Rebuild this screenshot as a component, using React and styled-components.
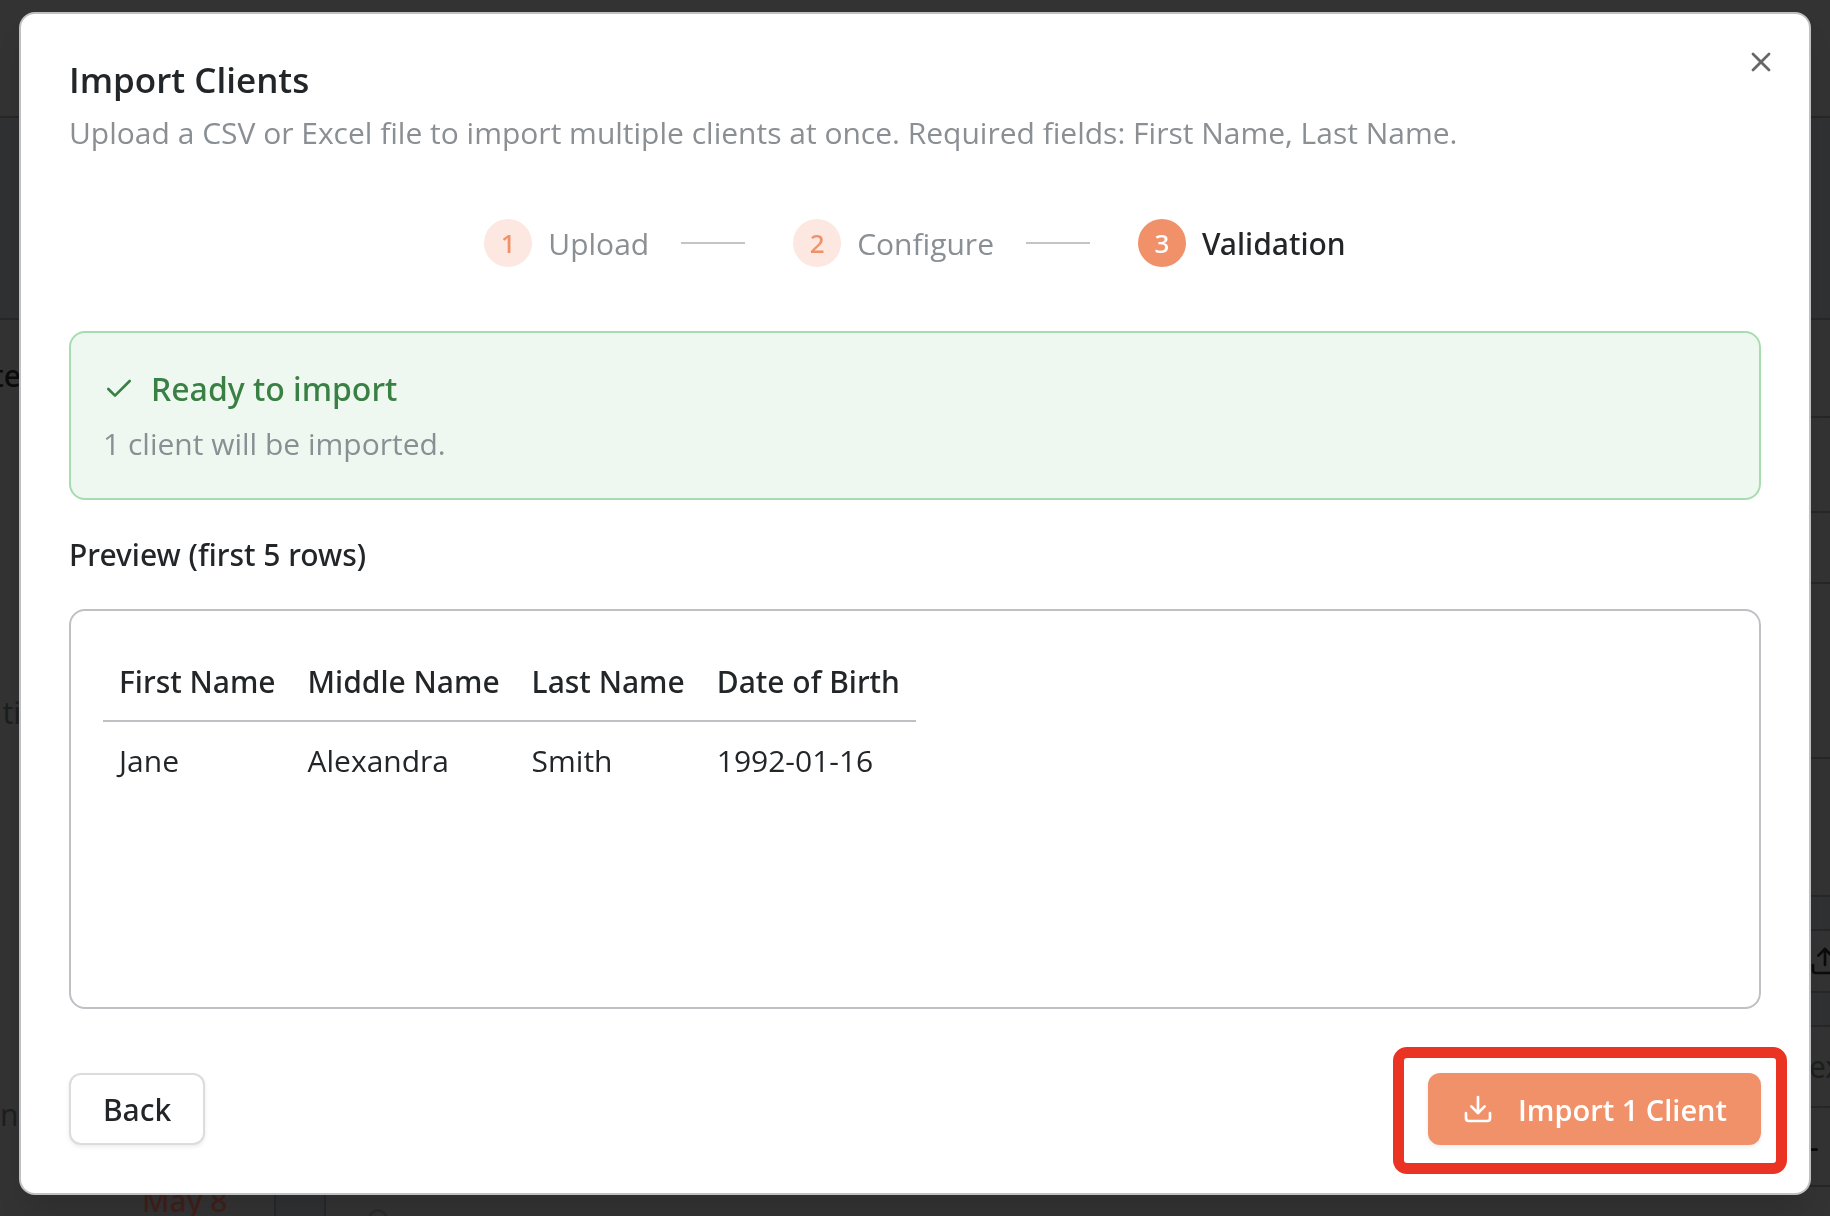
import styled, { createGlobalStyle } from 'styled-components';
import { Check, Download, Upload, X } from 'lucide-react';

const mediumFont = "'Noto Sans', 'Open Sans', sans-serif";

const GlobalStyle = createGlobalStyle`
  * {
    box-sizing: border-box;
  }

  body {
    margin: 0;
    background: #333333;
    color: #232628;
    font-family: 'Open Sans', 'Noto Sans', sans-serif;
    font-size: 30px;
    line-height: 45px;
  }
`;

const Page = styled.div`
  display: flex;
  flex-direction: column;
  height: 100vh;
  overflow: hidden;
  background: #333333;
`;

const PageHeader = styled.div`
  flex: none;
  height: 118px;
  border-bottom: 2px solid #272727;
`;

const PageToolbar = styled.div`
  flex: none;
  height: 202px;
  background: #2f3133;
  border-bottom: 2px solid #272829;
`;

const PageBody = styled.div`
  flex: none;
  display: flex;
  justify-content: space-between;
  height: 867px;
`;

const SideColumn = styled.div`
  width: 21px;
  overflow: hidden;
`;

const SideCell = styled.div`
  display: flex;
  align-items: center;
  justify-content: ${({ $end }) => ($end ? 'flex-end' : 'flex-start')};
  height: ${({ $height }) => $height}px;
  background: ${({ $tinted }) => ($tinted ? '#2f3133' : 'transparent')};
  border-bottom: ${({ $line }) => ($line ? '2px solid #272727' : 'none')};
  color: ${({ $strong }) => ($strong ? '#0b0b0b' : '#1d1f1f')};
  font-family: ${mediumFont};
  font-weight: ${({ $strong }) => ($strong ? 500 : 400)};
  white-space: nowrap;

  svg {
    flex: none;
  }
`;

const DayRow = styled.div`
  flex: 1;
  display: flex;
  align-items: flex-start;
  overflow: hidden;
`;

const DayLabel = styled.div`
  width: 274px;
  padding-left: 142px;
  line-height: 28px;
  color: #40201a;
  font-family: ${mediumFont};
  font-weight: 500;
`;

const DayGutter = styled.div`
  align-self: stretch;
  width: 52px;
  background: #2f3133;
  border: solid #272829;
  border-width: 0 2px;
`;

const DayDot = styled.div`
  width: 20px;
  height: 20px;
  margin: 22px 0 0 42px;
  border: 3px solid #2b2b2b;
  border-radius: 50%;
`;

const Overlay = styled.div`
  position: fixed;
  inset: 0;
  display: flex;
  align-items: flex-start;
  justify-content: center;
  padding: 12px 16px;
`;

const Dialog = styled.section`
  position: relative;
  width: 100%;
  max-width: 1792px;
  padding: 48px;
  background: #ffffff;
  border: 2px solid #bfc0c4;
  border-radius: 16px;
  box-shadow: 0 20px 30px -6px rgba(0, 0, 0, 0.12);
`;

const CloseButton = styled.button`
  position: absolute;
  top: 32px;
  right: 32px;
  display: flex;
  padding: 0;
  border: 0;
  background: none;
  color: #666768;
  cursor: pointer;
`;

const Title = styled.h2`
  margin: 0 0 12px;
  font-size: 35px;
  line-height: 36px;
  font-weight: 600;
`;

const Muted = styled.p`
  margin: 0;
  color: #8a8f94;
`;

const Steps = styled.ol`
  display: flex;
  align-items: center;
  justify-content: center;
  margin: 64px 0;
  padding: 0;
  list-style: none;
`;

const Step = styled.li`
  display: flex;
  align-items: center;
  gap: 16px;
  height: 48px;
  color: ${({ $active }) => ($active ? '#232628' : '#8a8f94')};
  font-family: ${({ $active }) => ($active ? mediumFont : 'inherit')};
  font-weight: ${({ $active }) => ($active ? 500 : 400)};

  &:not(:last-child)::after {
    content: '';
    width: 64px;
    height: 2px;
    margin: 0 48px 0 16px;
    background: #c4c4c6;
  }
`;

const StepNumber = styled.span`
  display: flex;
  align-items: center;
  justify-content: center;
  width: 48px;
  height: 48px;
  border-radius: 50%;
  background: ${({ $active }) => ($active ? '#f0916a' : '#fce8e1')};
  color: ${({ $active }) => ($active ? '#ffffff' : '#f0916a')};
  font-family: ${mediumFont};
  font-size: 26px;
  font-weight: 500;
`;

const Notice = styled.div`
  padding: 32px;
  background: #eff8f0;
  border: 2px solid #a6dcae;
  border-radius: 16px;
`;

const NoticeTitle = styled.div`
  display: flex;
  align-items: center;
  gap: 16px;
  margin-bottom: 8px;
  color: #3a8044;
  font-family: ${mediumFont};
  font-size: 32px;
  line-height: 48px;
  font-weight: 500;
`;

const PreviewTitle = styled.h3`
  margin: 32px 0;
  font-family: ${mediumFont};
  font-size: 30px;
  font-weight: 500;
`;

const PreviewBox = styled.div`
  min-height: 400px;
  padding: 32px;
  border: 2px solid #bfc0c4;
  border-radius: 16px;
`;

const Table = styled.table`
  border-collapse: separate;
  border-spacing: 0;
  text-align: left;
`;

const HeadCell = styled.th`
  padding: 16px;
  border-bottom: 2px solid #bfc0c4;
  font-family: ${mediumFont};
  font-weight: 500;
`;

const Cell = styled.td`
  padding: 16px;
`;

const Footer = styled.div`
  display: flex;
  justify-content: space-between;
  margin-top: 64px;
`;

const Button = styled.button`
  display: flex;
  align-items: center;
  gap: 24px;
  height: 72px;
  padding: 0 32px;
  border: 2px solid #dadcdd;
  border-radius: 12px;
  background: #ffffff;
  box-shadow: 0 2px 4px rgba(0, 0, 0, 0.08);
  color: #232628;
  font-family: ${mediumFont};
  font-size: 30px;
  line-height: 45px;
  font-weight: 500;
  cursor: pointer;
`;

const PrimaryButton = styled(Button)`
  border-color: #f0916a;
  background: #f0916a;
  color: #ffffff;
  font-family: 'Open Sans', sans-serif;
  font-size: 29px;
  font-weight: 600;
`;

const Highlight = styled.div`
  position: relative;

  &::after {
    content: '';
    position: absolute;
    inset: -26px -26px -29px -35px;
    border: 11px solid #ea3323;
    border-radius: 14px;
    pointer-events: none;
  }
`;

const steps = ['Upload', 'Configure', 'Validation'];
const columns = ['First Name', 'Middle Name', 'Last Name', 'Date of Birth'];
const rows = [['Jane', 'Alexandra', 'Smith', '1992-01-16']];

const ClientsPage = () => (
  <Page aria-hidden="true">
    <PageHeader />
    <PageToolbar />
    <PageBody>
      <SideColumn>
        <SideCell $height={110} $strong $end>te</SideCell>
        <SideCell $height={564} $end>ti</SideCell>
        <SideCell $height={240}>n</SideCell>
      </SideColumn>
      <SideColumn>
        <SideCell $height={98} $line />
        <SideCell $height={95} $line />
        <SideCell $height={71} $line />
        <SideCell $height={175} $line />
        <SideCell $height={138} $line />
        <SideCell $height={34} $tinted $line />
        <SideCell $height={62} $strong $line>
          <Upload size={32} />
        </SideCell>
        <SideCell $height={34} $tinted $line />
        <SideCell $height={81} $line>ex</SideCell>
        <SideCell $height={79} $strong $line>-</SideCell>
      </SideColumn>
    </PageBody>
    <DayRow>
      <DayLabel>May 8</DayLabel>
      <DayGutter />
      <DayDot />
    </DayRow>
  </Page>
);

const ImportDialog = () => {
  const current = steps.length - 1;

  return (
    <Dialog role="dialog" aria-modal="true" aria-labelledby="import-title">
      <Title id="import-title">Import Clients</Title>
      <Muted>
        Upload a CSV or Excel file to import multiple clients at once. Required fields: First Name, Last Name.
      </Muted>
      <Steps>
        {steps.map((step, index) => (
          <Step key={step} $active={index === current}>
            <StepNumber $active={index === current}>{index + 1}</StepNumber>
            <span>{step}</span>
          </Step>
        ))}
      </Steps>
      <Notice>
        <NoticeTitle>
          <Check size={32} />
          Ready to import
        </NoticeTitle>
        <Muted>1 client will be imported.</Muted>
      </Notice>
      <PreviewTitle>Preview (first 5 rows)</PreviewTitle>
      <PreviewBox>
        <Table>
          <thead>
            <tr>
              {columns.map((column) => (
                <HeadCell key={column}>{column}</HeadCell>
              ))}
            </tr>
          </thead>
          <tbody>
            {rows.map((row) => (
              <tr key={row[0]}>
                {row.map((value) => (
                  <Cell key={value}>{value}</Cell>
                ))}
              </tr>
            ))}
          </tbody>
        </Table>
      </PreviewBox>
      <Footer>
        <Button type="button">Back</Button>
        <Highlight>
          <PrimaryButton type="button">
            <Download size={32} />
            Import 1 Client
          </PrimaryButton>
        </Highlight>
      </Footer>
      <CloseButton type="button" aria-label="Close">
        <X size={32} />
      </CloseButton>
    </Dialog>
  );
};

const App = () => (
  <>
    <GlobalStyle />
    <ClientsPage />
    <Overlay>
      <ImportDialog />
    </Overlay>
  </>
);

export default App;
